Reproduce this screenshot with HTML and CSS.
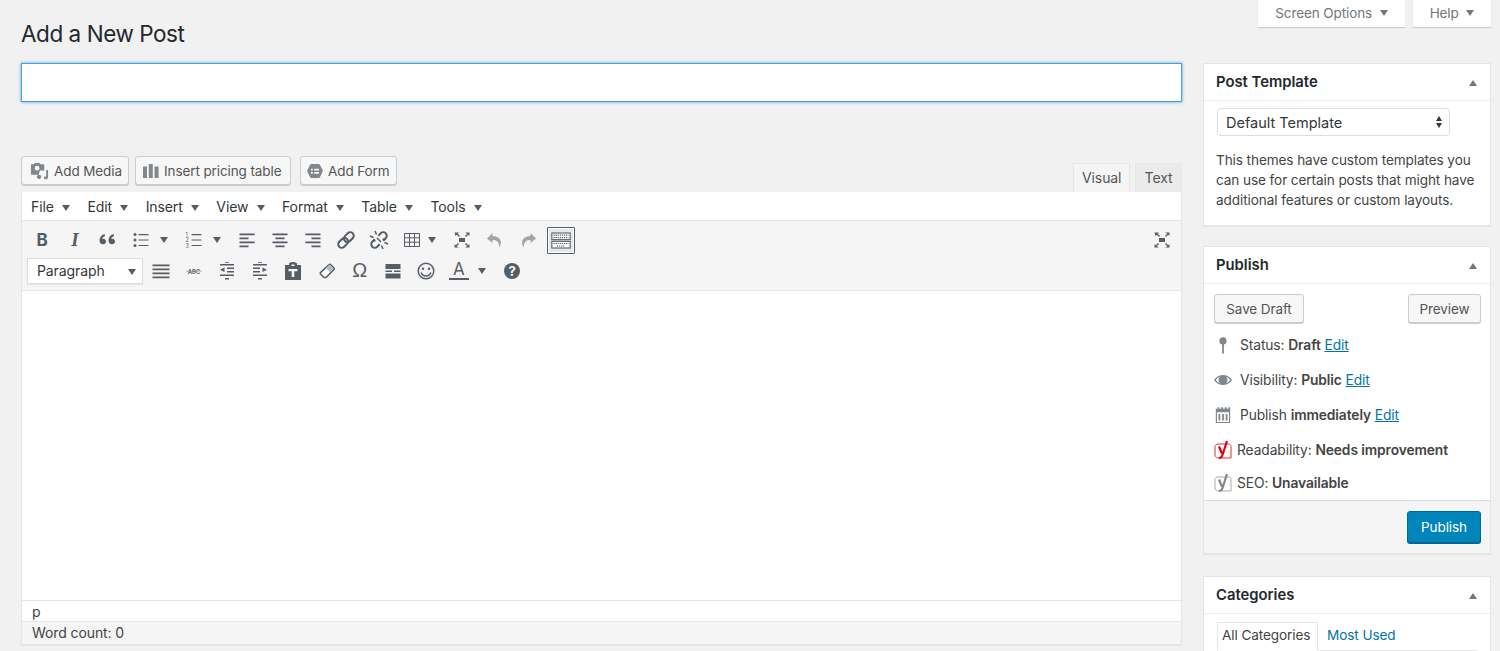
FILE: index.html
```html
<!DOCTYPE html>
<html lang="en">
<head>
<meta charset="utf-8">
<title>Add a New Post</title>
<link rel="stylesheet" href="styles.css">
</head>
<body>
<header class="top">
  <h1 class="title">Add a New Post</h1>
  <div class="meta-tabs">
    <button class="meta-tab meta-screen">Screen Options <i class="caret caret-meta"></i></button>
    <button class="meta-tab meta-help">Help <i class="caret caret-meta"></i></button>
  </div>
</header>
<div class="columns">
  <main class="main">
    <input class="post-title" type="text" aria-label="Title">
    <div class="editor-head">
      <div class="media-btns">
        <button class="btn btn-media"><svg class="ic" viewBox="0 0 20 20"><path fill="#82878c" d="M1 3.500h3l1-1.500h5l1 1.500h3c.6 0 1 .4 1 1V10h-4.500l-1 2.500 0 2H2c-.6 0-1-.4-1-1z"/><circle cx="7.500" cy="7.500" r="2.500" fill="#f7f7f7"/><path fill="#82878c" d="M17 9.500h2V17c0 1.500-1.200 2.200-2.400 2.200-1.100 0-1.800-.6-1.800-1.400 0-1 1-1.600 2.200-1.400zM9.500 14.500c1.300 0 2.300.8 2.300 2s-1 2.500-2.300 2.500-2.300-1-2.300-2.300 1-2.200 2.300-2.200z"/></svg>Add Media</button>
        <button class="btn btn-pricing"><svg class="ic" viewBox="0 0 18 18"><path fill="#82878c" d="M0 4h4.500v13H0zM6.500 1H11v16H6.500zM13 4h4.500v13H13z"/></svg>Insert pricing table</button>
        <button class="btn btn-form"><svg class="ic" viewBox="0 0 18 18"><path fill="#82878c" d="M5 1h8c.7 0 1.200.3 1.500.9l3 6c.3.700.3 1.400 0 2l-3 6c-.3.600-.8 1-1.500 1H5c-.7 0-1.200-.4-1.500-1l-3-6c-.3-.6-.3-1.300 0-2l3-6C3.800 1.300 4.300 1 5 1z"/><path fill="#f7f7f7" d="M4.500 6.500h2v2h-2zM8 6.500h5.500v2H8zM4.500 10h2v2h-2zM8 10h5.500v2H8z"/></svg>Add Form</button>
      </div>
      <div class="mode-tabs">
        <span class="mode mode-on">Visual</span>
        <span class="mode">Text</span>
      </div>
    </div>
    <section class="editor">
      <nav class="menubar">
        <span class="menu">File <i class="caret"></i></span>
        <span class="menu">Edit <i class="caret"></i></span>
        <span class="menu">Insert <i class="caret"></i></span>
        <span class="menu">View <i class="caret"></i></span>
        <span class="menu">Format <i class="caret"></i></span>
        <span class="menu">Table <i class="caret"></i></span>
        <span class="menu">Tools <i class="caret"></i></span>
      </nav>
      <div class="toolbar">
        <div class="tb-row tb-row-1">
          <span class="tb tb-b">B</span>
          <span class="tb tb-i">I</span>
          <span class="tb"><svg viewBox="0 0 20 20"><path d="M1.500 10.500c0-3.400 2.100-5.800 5.300-6.500v2.300c-1.500.4-2.400 1.400-2.500 2.600.3-.1.600-.2 1-.2 1.600 0 2.700 1.200 2.700 2.700S6.800 14.200 5 14.200c-2.100 0-3.500-1.600-3.500-3.700zM10.500 10.500c0-3.400 2.100-5.800 5.300-6.500v2.300c-1.500.4-2.400 1.400-2.500 2.600.3-.1.600-.2 1-.2 1.600 0 2.700 1.200 2.700 2.700s-1.200 2.800-3 2.800c-2.100 0-3.500-1.600-3.500-3.700z"/></svg></span>
          <span class="tb tb-split"><svg viewBox="0 0 20 20"><circle cx="4" cy="4.500" r="1.500"/><circle cx="4" cy="10" r="1.500"/><circle cx="4" cy="15.500" r="1.500"/><path d="M7.500 4h10v1.200h-10zM7.500 9.400h10v1.200h-10zM7.500 14.900h10v1.200h-10z"/></svg><i class="caret caret-tb"></i></span>
          <span class="tb tb-split"><svg viewBox="0 0 20 20"><text x="1.500" y="6.500" class="svg-num">1</text><text x="1.500" y="12" class="svg-num">2</text><text x="1.500" y="17.500" class="svg-num">3</text><path d="M7.500 4h10v1.200h-10zM7.500 9.400h10v1.200h-10zM7.500 14.900h10v1.200h-10z"/></svg><i class="caret caret-tb"></i></span>
          <span class="tb"><svg viewBox="0 0 20 20"><path d="M2.500 3.500h15v1.700h-15zM2.500 7.500h9v1.700h-9zM2.500 11.500h15v1.700h-15zM2.500 15.500h9v1.700h-9z"/></svg></span>
          <span class="tb"><svg viewBox="0 0 20 20"><path d="M2.500 3.500h15v1.700h-15zM5.500 7.500h9v1.700h-9zM2.500 11.500h15v1.700h-15zM5.500 15.500h9v1.700h-9z"/></svg></span>
          <span class="tb"><svg viewBox="0 0 20 20"><path d="M2.500 3.500h15v1.700h-15zM8.500 7.500h9v1.700h-9zM2.500 11.500h15v1.700h-15zM8.500 15.500h9v1.700h-9z"/></svg></span>
          <span class="tb"><svg viewBox="0 0 20 20"><g class="stroke2" transform="rotate(-45 10 10)"><rect x="0.500" y="6.500" width="11" height="7" rx="3.500"/><rect x="8.500" y="6.500" width="11" height="7" rx="3.500"/></g></svg></span>
          <span class="tb"><svg viewBox="0 0 20 20"><g class="stroke2" transform="rotate(-45 10 10)"><path d="M7.500 6.500H4a3.500 3.500 0 0 0 0 7h3.500M12.500 6.500H16a3.500 3.500 0 0 1 0 7h-3.500"/></g><path class="stroke1b" d="M6 1l1.500 3.500M1 6l3.500 1.500M14 19l-1.500-3.500M19 14l-3.500-1.500M8 8l4 4M3 11.500l3.500-1M17 8.500l-3.500 1"/></svg></span>
          <span class="tb tb-table"><svg viewBox="0 0 20 20"><path class="stroke1" d="M2.500 3.500h15v13h-15zM2.500 7.800h15M2.500 12.200h15M7.500 3.500v13M12.500 3.500v13"/></svg><i class="caret caret-tb"></i></span>
          <span class="tb"><svg viewBox="0 0 20 20"><use href="#fs"/></svg></span>
          <span class="tb tb-off"><svg viewBox="0 0 20 20"><path d="M7.500 3L2 8.500l5.500 4.500v-3c4 0 6.500 1.500 7 7.500 2.500-4.500 2.500-11-7-11.500z"/></svg></span>
          <span class="tb tb-off"><svg viewBox="0 0 20 20"><path d="M12.500 3L18 8.500 12.500 13v-3c-4 0-6.500 1.500-7 7.500C3 13 3 6.500 12.500 6z"/></svg></span>
          <span class="tb tb-kb"><svg viewBox="0 0 24 20"><rect class="kb-row" x="1" y="1" width="22" height="8"/><rect class="kb-row" x="1" y="11" width="22" height="8"/><path class="kb-dots" d="M3 3.500h18M3 6.500h18M3 13.500h18M7 16.500h10"/></svg></span>
          <span class="tb tb-end"><svg viewBox="0 0 20 20"><use href="#fs"/></svg></span>
        </div>
        <div class="tb-row tb-row-2">
          <div class="format">Paragraph<i class="caret caret-tb caret-format"></i></div>
          <span class="tb"><svg viewBox="0 0 20 20"><path d="M1.500 3.500h17v1.800h-17zM1.500 7.500h17v1.800h-17zM1.500 11.500h17v1.800h-17zM1.500 15.500h17v1.800h-17z"/></svg></span>
          <span class="tb"><svg viewBox="0 0 20 20"><text x="10" y="12.500" text-anchor="middle" class="svg-abc">ABC</text><path class="abc-line" d="M2 9.800h16v.6H2z"/></svg></span>
          <span class="tb"><svg viewBox="0 0 20 20"><path d="M3 3h14v1.500H3zM10 6.500h7V8h-7zM10 10h7v1.500h-7zM3 13.500h14V15H3zM8 17h4v1.500H8zM8 1h4v.8H8zM7.500 6.500v4.500L3 8.800z"/></svg></span>
          <span class="tb"><svg viewBox="0 0 20 20"><path d="M3 3h14v1.500H3zM3 6.500h7V8H3zM3 10h7v1.500H3zM3 13.500h14V15H3zM8 17h4v1.500H8zM8 1h4v.8H8zM12.500 6.500v4.500l4.500-2.200z"/></svg></span>
          <span class="tb"><svg viewBox="0 0 20 20"><path fill-rule="evenodd" d="M2 4h4V3c0-1 1-2 4-2s4 1 4 2v1h4v15H2zM8.500 3.500v1.500h3V3.500zM5.500 8v2.200h3.200V16h2.600v-5.800h3.200V8z"/></svg></span>
          <span class="tb"><svg viewBox="0 0 20 20"><path class="stroke1b eraser" d="M13.500 3.500l3.500 3.500c.4.400.4 1 0 1.400L9 16.500H7L3.500 13c-.4-.4-.4-1 0-1.400l8.600-8.100c.4-.4 1-.4 1.400 0z"/><path class="eraser-tip" d="M12.500 3.500l4 4-3.500 3.500-4-4z"/></svg></span>
          <span class="tb tb-omega">Ω</span>
          <span class="tb"><svg viewBox="0 0 20 20"><path d="M2.500 3h15v5h-15zM2.500 9.500h6.500v1.500H2.500zM11 9.500h6.500v1.500H11zM2.500 12.500h15v5h-15z"/></svg></span>
          <span class="tb"><svg viewBox="0 0 20 20"><circle cx="10" cy="10" r="7.800" class="stroke1b"/><circle cx="7" cy="7.800" r="1.200"/><circle cx="13" cy="7.800" r="1.200"/><path class="stroke1b" d="M5 11.500c1 2.500 3 3.500 5 3.500s4-1 5-3.500"/></svg></span>
          <span class="tb tb-table tb-color"><span class="a-wrap"><span class="a-glyph">A</span><span class="a-bar"></span></span><i class="caret caret-tb"></i></span>
          <span class="tb"><svg viewBox="0 0 20 20"><circle cx="10" cy="10" r="8"/><text x="10" y="14.500" text-anchor="middle" class="svg-help">?</text></svg></span>
        </div>
      </div>
      <div class="canvas"></div>
      <div class="path">p</div>
      <div class="count">Word count: 0</div>
    </section>
  </main>

  <aside class="side">
    <section class="box box-template">
      <h2 class="box-h">Post Template<i class="caret-up"></i></h2>
      <div class="box-b">
        <div class="fake-select">Default Template<span class="updown"><i></i><i></i></span></div>
        <p class="hint">This themes have custom templates you can use for certain posts that might have additional features or custom layouts.</p>
      </div>
    </section>
    <section class="box box-publish">
      <h2 class="box-h">Publish<i class="caret-up"></i></h2>
      <div class="pub-btns">
        <button class="btn btn-save">Save Draft</button>
        <button class="btn btn-preview">Preview</button>
      </div>
      <ul class="pub-list">
        <li class="pub pub-status"><svg class="pub-ic" viewBox="0 0 20 20"><circle cx="10" cy="5.500" r="4"/><path d="M9 8h2v11.500H9z"/></svg><span>Status: <b>Draft</b> <a href="#">Edit</a></span></li>
        <li class="pub pub-vis"><svg class="pub-ic" viewBox="0 0 20 20"><path fill-rule="evenodd" d="M0 10c2.500-4 6-5.500 10-5.500S17.500 6 20 10c-2.500 4-6 5.500-10 5.500S2.500 14 0 10zm2 0c1.300 1.800 2.800 3 4.600 3.700A5 5 0 0 1 5 10c0-1.500.6-2.800 1.600-3.700C4.800 7 3.300 8.200 2 10zm11.400 3.700C15.200 13 16.700 11.800 18 10c-1.300-1.800-2.800-3-4.600-3.700a5 5 0 0 1 0 7.400z"/><circle cx="10" cy="10" r="3.500"/></svg><span>Visibility: <b>Public</b> <a href="#">Edit</a></span></li>
        <li class="pub pub-date"><svg class="pub-ic" viewBox="0 0 20 20"><path fill-rule="evenodd" d="M2 3h2V1.500h2V3h2V1.500h2V3h2V1.500h2V3h2V1.500h2V3v16H2zM3.300 7v10.700h13.400V7zM5 9h2v7H5zM9 9h2v7H9zM13 9h2v7h-2z"/></svg><span>Publish <b>immediately</b> <a href="#">Edit</a></span></li>
        <li class="pub pub-read"><svg class="y-ic y-red" viewBox="0 0 18 20"><path class="y-box" d="M4 4h10.500c1.300 0 2.500 1 2.500 2.500V18H5c-2 0-4-1-4-3V6.500C1 5 2.500 4 4 4z"/><path class="y-mark" d="M5 6.500l3 7M13 1L8.500 15c-.5 1.500-1.500 3-3.500 3"/></svg><span>Readability: <b>Needs improvement</b></span></li>
        <li class="pub pub-seo"><svg class="y-ic" viewBox="0 0 18 20"><path class="y-box" d="M4 4h10.500c1.300 0 2.500 1 2.500 2.500V18H5c-2 0-4-1-4-3V6.500C1 5 2.500 4 4 4z"/><path class="y-mark" d="M5 6.500l3 7M13 1L8.500 15c-.5 1.500-1.500 3-3.500 3"/></svg><span>SEO: <b>Unavailable</b></span></li>
      </ul>
      <div class="pub-foot"><button class="btn-primary">Publish</button></div>
    </section>
    <section class="box box-cats">
      <h2 class="box-h">Categories<i class="caret-up"></i></h2>
      <div class="cat-tabs">
        <span class="cat-tab cat-on">All Categories</span>
        <a class="cat-tab" href="#">Most Used</a>
      </div>
      <div class="cat-panel"></div>
    </section>
  </aside>
</div>
<svg class="sprite" aria-hidden="true"><defs><g id="fs"><path d="M7 8h6v4H7z"/><path d="M2.500 2.500H7L5.700 3.800 8 6l-1 1-2.200-2.300L3.500 6zM17.500 2.500V6l-1.300-1.300L14 7l-1-1 2.300-2.200L13 2.500zM2.500 17.500V14l1.300 1.300L6 13l1 1-2.300 2.200L7 17.500zM17.500 17.500H13l2.300-1.300L13 14l1-1 2.200 2.300L17.500 14z"/></g></defs></svg>
</body>
</html>
```

FILE: styles.css
```css
* { box-sizing: border-box; }
html, body { margin: 0; height: 651px; overflow: hidden; }
body { background: #f1f1f1; color: #444; font: 14px/20px Inter, "Liberation Sans", sans-serif; letter-spacing: -.1px; }
button { font: inherit; letter-spacing: inherit; }
a { color: #0073aa; }
.sprite { width: 0; height: 0; display: block; }

.top { display: flex; justify-content: space-between; align-items: flex-start; height: 63px; padding: 0 9px 0 21px; }
.title { margin: 19px 0 0; font-size: 22.500px; line-height: 29px; font-weight: 400; color: #23282d; letter-spacing: -.45px; }
.meta-tabs { display: flex; gap: 8px; }
.meta-tab { height: 27px; border: 0; background: #fff; color: #72777c; box-shadow: 0 1px 1px rgba(0,0,0,.15); padding: 0 0 1px; text-align: center; font-size: 13.500px; }
.meta-screen { width: 147px; }
.meta-help { width: 78px; }
.caret { display: inline-block; width: 0; height: 0; border: 4.500px solid transparent; border-top: 6px solid #555d66; border-bottom: 0; vertical-align: 1px; margin-left: 3px; }
.caret-meta { border-top-color: #72777c; margin-left: 4px; vertical-align: 2px; }

.columns { display: flex; gap: 21px; padding: 0 9px 0 21px; }
.main { width: 1161px; }
.side { width: 288px; }

.post-title { display: block; width: 100%; height: 39px; border: 1px solid #4a9fdc; background: #fff; box-shadow: 0 0 3px rgba(30,140,210,.8); outline: 0; }

.editor-head { display: flex; justify-content: space-between; align-items: flex-end; margin-top: 54px; height: 36px; }
.media-btns { display: flex; gap: 6px; height: 30px; align-self: flex-start; }
.btn { display: inline-flex; align-items: center; height: 29px; border: 1px solid #ccc; border-radius: 3px; background: #f7f7f7; color: #555; box-shadow: 0 1px 0 #ccc; padding: 0 7px; white-space: nowrap; font-size: 13.500px; }
.ic { width: 16px; height: 16px; margin-right: 5px; flex: none; }
.btn-media { width: 108px; padding-left: 8px; }
.btn-media .ic { width: 19px; height: 19px; margin-right: 5px; }
.btn-pricing { width: 156px; }
.btn-form { width: 97px; padding-left: 6px; margin-left: 3px; }

.mode-tabs { display: flex; gap: 5px; }
.mode { height: 29px; padding: 0 8px; background: #ebebeb; border: 1px solid #e8e8e8; border-bottom: 0; color: #555; line-height: 28px; width: 47px; text-align: center; }
.mode-on { width: 57px; background: #f5f5f5; border-color: #e5e5e5; }

.editor { height: 453px; border: 1px solid #e5e5e5; border-top: 0; box-shadow: 0 1px 1px rgba(0,0,0,.04); display: flex; flex-direction: column; background: #fff; }
.menubar { display: flex; gap: 17.300px; height: 28px; align-items: center; padding: 2px 0 0 9px; background: #fff; color: #32373c; font-size: 14px; }
.menu { white-space: nowrap; }
.menu .caret { margin-left: 4.500px; }
.toolbar { background: #f5f5f5; border-top: 1px solid #e5e5e5; border-bottom: 1px solid #e5e5e5; height: 71px; padding-top: 5px; }
.tb-row { display: flex; align-items: center; color: #555d66; }
.tb-row-1 { height: 28px; padding: 0 3px 0 3.500px; }
.tb-row-2 { height: 27px; margin-top: 3px; padding-left: 5px; }
.tb-row-2 .tb { width: 33.100px; }
.tb { flex: none; width: 33px; height: 28px; display: flex; align-items: center; justify-content: center; color: #555d66; }
.tb svg { width: 20px; height: 20px; fill: currentColor; flex: none; }
.tb-b { font-weight: 700; font-size: 17px; }
.tb-i { font: italic 700 19px "Liberation Serif", serif; }
.tb-split { width: 53px; justify-content: flex-start; padding-left: 6.500px; }
.tb-table { width: 50px; justify-content: flex-start; padding-left: 6.500px; }
.tb-row-2 .tb-color { width: 53px; }
.caret-tb { margin-left: 8px; vertical-align: 0; }
.tb-split .caret-tb { margin-left: 9px; }
.tb-table .caret-tb { margin-left: 6px; }
.tb-color .caret-tb { margin-left: 9px; }
.tb-off { color: #a0a5aa; }
.tb-kb { width: 28px; height: 27px; margin-left: 2.500px; border: 1px solid #555d66; border-radius: 1px; background: #e8e8e8; box-shadow: inset 0 0 0 1px #fff; }
.tb-kb svg { width: 20px; height: 17px; }
.kb-row { fill: #fff; stroke: currentColor; stroke-width: 1.300; }
.kb-dots { fill: none; stroke: currentColor; stroke-width: 1.300; stroke-dasharray: 1.500 1; }
.tb-end { margin-left: auto; }
.stroke2 { fill: none; stroke: currentColor; stroke-width: 2; }
.stroke1 { fill: none; stroke: currentColor; stroke-width: 1; }
.stroke1b { fill: none; stroke: currentColor; stroke-width: 1.500; }
.tb svg .eraser { fill: #fff; }
.eraser-tip { fill: #b4b9be; }
.abc-line { opacity: .65; }
.svg-num { font: 5.500px Inter, sans-serif; }
.svg-abc { font: 600 5.800px Inter, sans-serif; letter-spacing: 0; }
.svg-help { font: 700 13px Inter, sans-serif; fill: #f5f5f5; }
.tb-omega { font: 400 20px "Liberation Sans", sans-serif; }
.a-wrap { width: 20px; display: flex; flex-direction: column; align-items: center; }
.a-glyph { font-size: 17px; line-height: 16px; }
.a-bar { width: 20px; height: 2.500px; background: #555d66; margin-top: 1px; }

.format { flex: none; width: 116px; height: 26px; margin-right: 1.500px; background: #fff; border: 1px solid #ddd; color: #32373c; padding: 0 9px; line-height: 24px; position: relative; box-shadow: 0 1px 1px rgba(0,0,0,.05); }
.caret-format { position: absolute; right: 6px; top: 10px; margin: 0; }

.canvas { flex: 1; background: #fff; }
.path { height: 21px; padding-left: 10px; border-top: 1px solid #e5e5e5; color: #444; background: #fff; line-height: 21px; }
.count { height: 23px; padding-left: 10px; border-top: 1px solid #e5e5e5; background: #f5f5f5; color: #444; line-height: 22px; }

.box { background: #fff; border: 1px solid #e5e5e5; box-shadow: 0 1px 1px rgba(0,0,0,.04); margin-bottom: 20px; }
.box-h { position: relative; margin: 0; height: 37px; padding: 0 12px; border-bottom: 1px solid #eee; font-size: 14.800px; font-weight: 600; line-height: 36px; color: #23282d; letter-spacing: 0; }
.caret-up { position: absolute; right: 13px; top: 16px; width: 0; height: 0; border: 4.500px solid transparent; border-bottom: 6px solid #72777c; border-top: 0; }
.box-template { height: 163px; }
.box-b { padding: 7px 12px 0; }
.fake-select { position: relative; margin-left: 1px; width: 233px; height: 28px; border: 1px solid #ddd; border-radius: 4px; background: #fff; color: #32373c; padding-left: 8px; line-height: 27px; font-size: 14.500px; letter-spacing: 0; }
.updown { position: absolute; right: 7px; top: 7px; display: flex; flex-direction: column; gap: 2px; }
.updown i { width: 0; height: 0; border: 3.500px solid transparent; border-bottom: 5px solid #32373c; border-top: 0; }
.updown i + i { border-top: 5px solid #32373c; border-bottom: 0; }
.hint { margin: 14px 0 0; font-size: 13.600px; line-height: 20px; color: #444; letter-spacing: -.1px; }

.box-publish { height: 308px; margin-bottom: 22px; display: flex; flex-direction: column; }
.pub-btns { display: flex; justify-content: space-between; padding: 10px 9px 0 10px; }
.btn-save { width: 90px; justify-content: center; }
.btn-preview { width: 73px; justify-content: center; }
.pub-list { list-style: none; margin: 0; padding: 0 0 0 10px; flex: 1; }
.pub { display: flex; align-items: center; height: 35px; color: #444; font-size: 13.800px; }
.pub b { font-weight: 600; }
.pub-status { margin-top: 4px; }
.pub-ic { width: 18px; height: 18px; fill: #82878c; margin-right: 8px; flex: none; }
.pub-seo { height: 31px; }
.y-ic { width: 18px; height: 20px; margin-right: 5px; flex: none; }
.y-box { fill: #fff; stroke: #a7aaad; stroke-width: 1; }
.y-mark { fill: none; stroke: #82878c; stroke-width: 2.200; }
.y-red .y-box { stroke: #dc3232; }
.y-red .y-mark { stroke: #e2001a; }
.pub-foot { height: 53px; background: #f5f5f5; border-top: 1px solid #ddd; padding: 10px 9px 0; display: flex; justify-content: flex-end; align-items: flex-start; }
.btn-primary { width: 74px; height: 32px; background: #0085ba; border: 1px solid #006799; border-radius: 3px; color: #fff; box-shadow: 0 1px 0 #006799; font-size: 13.500px; }

.box-cats { height: 120px; }
.cat-tabs { display: flex; padding: 8px 12px 0 13px; height: 36px; }
.cat-tab { padding: 0 5px; height: 27px; line-height: 26px; text-decoration: none; color: #0073aa; white-space: nowrap; font-size: 13.600px; }
.cat-on { width: 101px; padding-left: 4px; border: 1px solid #e5e5e5; border-bottom: 1px solid #fff; color: #444; margin-right: 4px; position: relative; z-index: 1; height: 29px; line-height: 24px; }
.cat-panel { border: 1px solid #e5e5e5; margin: 0 12px 0 13px; height: 60px; }
```
